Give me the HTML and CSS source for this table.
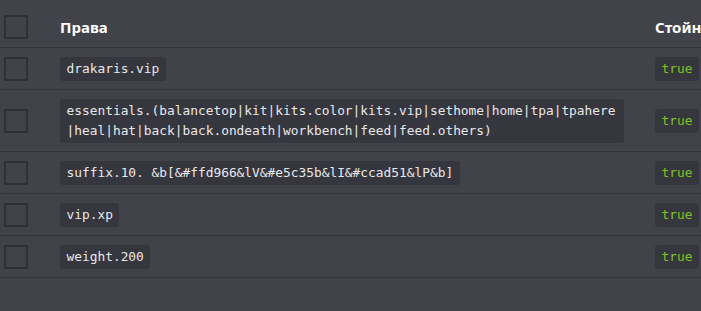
FILE: index.html
```html
<!DOCTYPE html>
<html lang="bg">
<head>
<meta charset="utf-8">
<title>Права</title>
<link rel="stylesheet" href="styles.css">
</head>
<body>
<table class="perm-table">
  <colgroup>
    <col class="col-check">
    <col class="col-name">
    <col class="col-value">
  </colgroup>
  <thead>
    <tr>
      <th class="cell-check"><span class="checkbox"></span></th>
      <th class="cell-name">Права</th>
      <th class="cell-value">Стойност</th>
    </tr>
  </thead>
  <tbody>
    <tr>
      <td class="cell-check"><span class="checkbox"></span></td>
      <td class="cell-name"><code class="pill">drakaris.vip</code></td>
      <td class="cell-value"><code class="pill pill-true">true</code></td>
    </tr>
    <tr>
      <td class="cell-check"><span class="checkbox"></span></td>
      <td class="cell-name"><code class="pill">essentials.(balancetop|kit|kits.color|kits.vip|sethome|home|tpa|tpahere|heal|hat|back|back.ondeath|workbench|feed|feed.others)</code></td>
      <td class="cell-value"><code class="pill pill-true">true</code></td>
    </tr>
    <tr>
      <td class="cell-check"><span class="checkbox"></span></td>
      <td class="cell-name"><code class="pill">suffix.10. &amp;b[&amp;#ffd966&amp;lV&amp;#e5c35b&amp;lI&amp;#ccad51&amp;lP&amp;b]</code></td>
      <td class="cell-value"><code class="pill pill-true">true</code></td>
    </tr>
    <tr>
      <td class="cell-check"><span class="checkbox"></span></td>
      <td class="cell-name"><code class="pill">vip.xp</code></td>
      <td class="cell-value"><code class="pill pill-true">true</code></td>
    </tr>
    <tr>
      <td class="cell-check"><span class="checkbox"></span></td>
      <td class="cell-name"><code class="pill">weight.200</code></td>
      <td class="cell-value"><code class="pill pill-true">true</code></td>
    </tr>
  </tbody>
</table>
</body>
</html>
```

FILE: styles.css
```css
html, body {
  margin: 0;
  padding: 0;
  background: #42424b;
  overflow: hidden;
}

body {
  font-family: "Noto Sans", "Open Sans", sans-serif;
  color: #e6e6e6;
}

.perm-table {
  border-collapse: separate;
  border-spacing: 0;
  table-layout: fixed;
  width: 760px;
}

.col-check { width: 60px; }
.col-name { width: 595px; }
.col-value { width: 105px; }

.perm-table th,
.perm-table td {
  border-bottom: 1px solid #34343b;
  vertical-align: middle;
  text-align: left;
  padding: 9px 0 8px 0;
}

.perm-table th {
  padding: 15px 0 8px 0;
  font-size: 15px;
  font-weight: 700;
  color: #ffffff;
  line-height: 24px;
  white-space: nowrap;
}

.perm-table .cell-check {
  padding-left: 4px;
}

.perm-table .cell-name {
  padding-right: 31px;
}

.checkbox {
  display: block;
  width: 24px;
  height: 24px;
  box-sizing: border-box;
  border: 2px solid #2f2f36;
  border-radius: 1px;
}

.pill {
  display: block;
  width: fit-content;
  max-width: 100%;
  box-sizing: border-box;
  font-family: "DejaVu Sans Mono", "Liberation Mono", monospace;
  font-size: 12.85px;
  line-height: 20px;
  padding: 2px 6.5px;
  background: #36363e;
  border-radius: 3px;
  color: #e8e8ea;
  word-break: break-all;
}

.pill-true {
  color: #7fc31f;
}
```
